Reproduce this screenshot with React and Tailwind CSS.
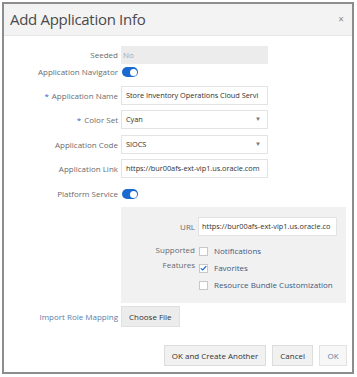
import React from "react";

function Toggle() {
  return (
    <div className="w-[16px] h-[10px] rounded-full bg-[#1c6ad0] relative">
      <div className="absolute right-[1.5px] top-[1.5px] w-[7px] h-[7px] rounded-full bg-white" />
    </div>
  );
}

function Label({ children, req }) {
  return (
    <div className="w-[117px] shrink-0 text-right pr-[3px] text-[#6b6b6b]">
      {req && <span className="text-[#1c6ad0] mr-[3px]">*</span>}
      {children}
    </div>
  );
}

function Field({ children, select }) {
  return (
    <div className="w-[147px] h-[19px] border border-[#e3e3e3] bg-white flex items-center pl-[4px] pr-[6px] text-[#333] overflow-hidden whitespace-nowrap">
      <span className="flex-1 text-[7.4px] tracking-[-0.05px]">{children}</span>
      {select && <span className="text-[6px] text-[#777]">▼</span>}
    </div>
  );
}

function Check({ checked }) {
  return (
    <div className="w-[9px] h-[9px] border border-[#c8c8c8] bg-white flex items-center justify-center">
      {checked && (
        <svg width="9" height="8" viewBox="0 0 9 8">
          <path d="M1 4.5 L3.5 6.5 L8 1.5" stroke="#1c6ad0" strokeWidth="1.6" fill="none" />
        </svg>
      )}
    </div>
  );
}

export default function App() {
  return (
    <div className="w-[357px] h-[377px] bg-white pt-[2px] pl-[2px] pr-[3px] pb-[3px]" style={{ fontFamily: '"Open Sans", "Noto Sans", sans-serif' }}>
      <div className="h-full border-2 border-[#8d8d8d] bg-white flex flex-col text-[8px]">
        <div className="h-[32px] bg-[#f3f3f3] border-b border-[#e6e6e6] flex items-center justify-between pl-[6px] pr-[8px] shrink-0">
          <span className="text-[15px] text-[#4a4a4a] tracking-[-0.3px]">Add Application Info</span>
          <span className="text-[10px] text-[#8a8a8a]">×</span>
        </div>
        <div className="flex flex-col pt-[10px]">
          <div className="flex items-center h-[18px]">
            <Label>Seeded</Label>
            <div className="w-[147px] h-[18px] bg-[#ececec] flex items-center pl-[2px] text-[#a9a9a9]">No</div>
          </div>
          <div className="flex items-center h-[16px]">
            <Label>Application Navigator</Label>
            <div className="pl-[1px]"><Toggle /></div>
          </div>
          <div className="flex items-center mt-[6px]">
            <Label req>Application Name</Label>
            <Field>Store Inventory Operations Cloud Servi</Field>
          </div>
          <div className="flex items-center mt-[5px]">
            <Label req>Color Set</Label>
            <Field select>Cyan</Field>
          </div>
          <div className="flex items-center mt-[6px]">
            <Label>Application Code</Label>
            <Field select>SIOCS</Field>
          </div>
          <div className="flex items-center mt-[5px]">
            <Label>Application Link</Label>
            <Field>https://bur00afs-ext-vip1.us.oracle.com</Field>
          </div>
          <div className="flex items-center h-[16px] mt-[8px]">
            <Label>Platform Service</Label>
            <div className="pl-[1px]"><Toggle /></div>
          </div>
          <div className="flex mt-[5px]">
            <div className="w-[117px] shrink-0" />
            <div className="w-[225px] h-[96px] bg-[#f1f1f1] pt-[10px]">
              <div className="flex items-center">
                <div className="w-[77px] text-right pr-[3px] text-[#6b6b6b]">URL</div>
                <div className="w-[139px] h-[19px] bg-white border border-[#e3e3e3] flex items-center pl-[3px] text-[#333] overflow-hidden whitespace-nowrap text-[7.4px]">https://bur00afs-ext-vip1.us.oracle.co</div>
              </div>
              <div className="flex mt-[6px]">
                <div className="w-[78px] text-right pr-[4px] text-[#6b6b6b] leading-[15px]">Supported<br />Features</div>
                <div className="flex flex-col gap-[5px] pt-[3px]">
                  <div className="flex items-center gap-[6px] text-[#3d5a80]"><Check />Notifications</div>
                  <div className="flex items-center gap-[6px] text-[#3d5a80]"><Check checked />Favorites</div>
                  <div className="flex items-center gap-[6px] text-[#3d5a80]"><Check />Resource Bundle Customization</div>
                </div>
              </div>
            </div>
          </div>
          <div className="flex items-center mt-[3px]">
            <Label><span className="text-[#5b7ea6]">Import Role Mapping</span></Label>
            <div className="h-[21px] px-[7px] bg-[#ececec] border border-[#e0e0e0] flex items-center text-[#333]">Choose File</div>
          </div>
          <div className="flex justify-end gap-[6px] pr-[5px] mt-[18px]">
            <div className="h-[21px] px-[7px] bg-[#f1f1f1] border border-[#dcdcdc] flex items-center text-[#333]">OK and Create Another</div>
            <div className="h-[21px] px-[7px] bg-[#f1f1f1] border border-[#dcdcdc] flex items-center text-[#333]">Cancel</div>
            <div className="h-[21px] w-[28px] bg-[#f7f7f7] border border-[#e3e3e3] flex items-center justify-center text-[#5b7ea6]">OK</div>
          </div>
        </div>
      </div>
    </div>
  );
}
